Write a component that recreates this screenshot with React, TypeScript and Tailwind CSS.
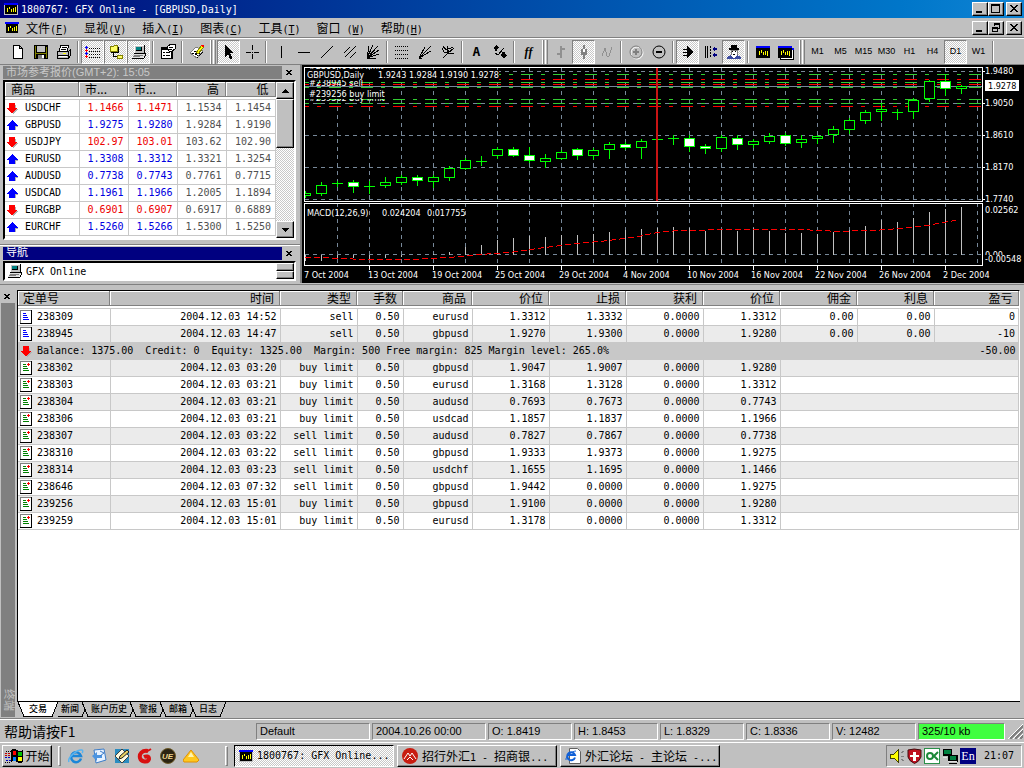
import { Fragment, type ReactNode } from 'react'
import clsx from 'clsx'

const mono = 'font-["DejaVu_Sans_Mono","Noto_Sans_CJK_SC",monospace] text-[10px]'
const hans = 'font-["Noto_Sans_CJK_SC",sans-serif] text-[12px]'
const sans = 'font-["Liberation_Sans","Noto_Sans_CJK_SC",sans-serif] text-[11px]'

const raised = 'border border-t-white border-l-white border-r-black border-b-black shadow-[inset_-1px_-1px_0_#808080] bg-[#c0c0c0]'
const sunken = 'border border-t-[#808080] border-l-[#808080] border-r-white border-b-white'
const dither = 'bg-[conic-gradient(#fff_25%,#c8c8c8_0_50%,#fff_0_75%,#c8c8c8_0)] bg-[length:2px_2px]'

const menus = [
  ['文件', '(', 'F', ')'],
  ['显视', '(', 'V', ')'],
  ['插入', '(', 'I', ')'],
  ['图表', '(', 'C', ')'],
  ['工具', '(', 'T', ')'],
  ['窗口', ' (', 'W', ')'],
  ['帮助', '(', 'H', ')'],
]

const quotes = [
  ['down', 'USDCHF', '1.1466', '1.1471', '1.1534', '1.1454'],
  ['up', 'GBPUSD', '1.9275', '1.9280', '1.9284', '1.9190'],
  ['down', 'USDJPY', '102.97', '103.01', '103.62', '102.90'],
  ['up', 'EURUSD', '1.3308', '1.3312', '1.3321', '1.3254'],
  ['up', 'AUDUSD', '0.7738', '0.7743', '0.7761', '0.7715'],
  ['up', 'USDCAD', '1.1961', '1.1966', '1.2005', '1.1894'],
  ['down', 'EURGBP', '0.6901', '0.6907', '0.6917', '0.6889'],
  ['up', 'EURCHF', '1.5260', '1.5266', '1.5300', '1.5250'],
]

const openOrders = [
  ['238309', '2004.12.03 14:52', 'sell', '0.50', 'eurusd', '1.3312', '1.3332', '0.0000', '1.3312', '0.00', '0.00', '0'],
  ['238945', '2004.12.03 14:47', 'sell', '0.50', 'gbpusd', '1.9270', '1.9300', '0.0000', '1.9280', '0.00', '0.00', '-10'],
]

const pendingOrders = [
  ['238302', '2004.12.03 03:20', 'buy limit', '0.50', 'gbpusd', '1.9047', '1.9007', '0.0000', '1.9280'],
  ['238303', '2004.12.03 03:21', 'buy limit', '0.50', 'eurusd', '1.3168', '1.3128', '0.0000', '1.3312'],
  ['238304', '2004.12.03 03:21', 'buy limit', '0.50', 'audusd', '0.7693', '0.7673', '0.0000', '0.7743'],
  ['238306', '2004.12.03 03:21', 'buy limit', '0.50', 'usdcad', '1.1857', '1.1837', '0.0000', '1.1966'],
  ['238307', '2004.12.03 03:22', 'sell limit', '0.50', 'audusd', '0.7827', '0.7867', '0.0000', '0.7738'],
  ['238310', '2004.12.03 03:22', 'sell limit', '0.50', 'gbpusd', '1.9333', '1.9373', '0.0000', '1.9275'],
  ['238314', '2004.12.03 03:23', 'sell limit', '0.50', 'usdchf', '1.1655', '1.1695', '0.0000', '1.1466'],
  ['238646', '2004.12.03 07:32', 'sell limit', '0.50', 'gbpusd', '1.9442', '0.0000', '0.0000', '1.9275'],
  ['239256', '2004.12.03 15:01', 'buy limit', '0.50', 'gbpusd', '1.9100', '0.0000', '0.0000', '1.9280'],
  ['239259', '2004.12.03 15:01', 'buy limit', '0.50', 'eurusd', '1.3178', '0.0000', '0.0000', '1.3312'],
]

const orderHeads = ['定单号', '时间', '类型', '手数', '商品', '价位', '止损', '获利', '价位', '佣金', '利息', '盈亏']

// high, low, body top, body bottom, filled; one every 16px
const candles: [number, number, number, number, boolean][] = [
  [191, 197, 193, 196, false],
  [182, 195, 185, 194, false],
  [181, 186, 183, 183, false],
  [180, 192, 182, 187, true],
  [181, 193, 186, 186, false],
  [177, 187, 182, 186, false],
  [175, 184, 177, 183, false],
  [175, 185, 177, 181, true],
  [175, 187, 177, 182, false],
  [166, 180, 168, 178, false],
  [158, 169, 160, 169, false],
  [156, 165, 161, 161, false],
  [147, 158, 149, 156, false],
  [147, 156, 149, 156, true],
  [147, 162, 155, 161, true],
  [154, 167, 158, 162, false],
  [150, 159, 152, 159, false],
  [148, 159, 149, 156, true],
  [148, 159, 150, 156, false],
  [142, 158, 144, 150, false],
  [142, 149, 144, 148, true],
  [139, 158, 141, 148, false],
  [135, 141, 139, 139, false],
  [135, 144, 138, 138, false],
  [135, 151, 138, 147, true],
  [144, 153, 146, 149, true],
  [135, 151, 137, 149, false],
  [135, 149, 138, 145, true],
  [139, 147, 141, 145, false],
  [133, 143, 136, 142, false],
  [133, 145, 135, 144, true],
  [135, 147, 139, 143, false],
  [135, 143, 136, 139, false],
  [126, 142, 129, 135, false],
  [118, 133, 120, 130, false],
  [110, 123, 112, 121, false],
  [103, 120, 109, 112, false],
  [109, 119, 112, 112, false],
  [98, 118, 100, 112, false],
  [80, 101, 81, 99, false],
  [74, 95, 81, 89, true],
  [85, 93, 86, 89, false],
]

const macd = [
  261, 261, 259, 258, 259, 258, 257, 255, 254, 252, 247, 245, 240, 238, 236, 237, 235, 235, 234, 232, 230,
  229, 228, 227, 228, 231, 229, 231, 228, 231, 233, 233, 234, 232, 230, 226, 220, 222, 218, 212, 209, 207,
]

const tradeLines: [number, string][] = [
  [74, '#32cd32'],
  [79, '#ff0000'],
  [82, '#32cd32'],
  [84, '#ff0000'],
  [87, '#32cd32'],
  [99, '#32cd32'],
  [103, '#32cd32'],
  [106, '#ff0000'],
]

const dates = ['7 Oct 2004', '13 Oct 2004', '19 Oct 2004', '25 Oct 2004', '29 Oct 2004', '4 Nov 2004', '10 Nov 2004', '16 Nov 2004', '22 Nov 2004', '26 Nov 2004', '2 Dec 2004']

function Icon({ w = 16, h = 16, children }: { w?: number; h?: number; children: ReactNode }) {
  return (
    <svg width={w} height={h} viewBox={`0 0 ${w} ${h}`} fill="none" stroke="none" shapeRendering="crispEdges" className="shrink-0" aria-hidden="true">
      {children}
    </svg>
  )
}

function AppIcon() {
  return (
    <Icon w={14} h={12}>
      <path d="M0 0h14v12H0z" fill="#c0c0c0" />
      <path d="M0 0h14v2H0z" fill="#0000ff" />
      <path d="M1 2h12v9H1z" fill="#000" />
      <path d="M3.5 5v4M5.5 4v2M7.5 6v3M9.5 5v4M11.5 4v5" stroke="#ffff00" />
    </Icon>
  )
}

function PcIcon() {
  return (
    <Icon>
      <path d="M4 1h10v8H4z" fill="#000" />
      <path d="M3 1h10v8H3z" fill="#c0c0c0" />
      <path d="M3 1.5h10M3.5 1v8" stroke="#fff" />
      <path d="M5 3h6v4H5z" fill="#000" />
      <path d="M5 3h5v3H5z" fill="#008080" />
      <path d="M3 10h11l-2 4H1z" fill="#e0e0e0" />
      <path d="M1 14.5h12M13.5 14v-2M14.5 12v-3M3 9.5h11" stroke="#000" />
      <path d="M3 11.5h9M2 12.5h7" stroke="#808080" />
    </Icon>
  )
}

function Arrow({ up }: { up: boolean }) {
  return (
    <Icon w={13} h={12}>
      {up ? (
        <>
          <path d="M7 3l6 5h-3v3H5V8z" fill="#b0b0b0" />
          <path d="M6 1L12 7H9v4H3V7H0z" fill="#0000ff" />
        </>
      ) : (
        <>
          <path d="M7 12l6-5h-3V3H5z" fill="#b0b0b0" />
          <path d="M6 11L12 6H9V1H3v5H0z" fill="#ff0000" />
        </>
      )}
    </Icon>
  )
}

function OrderIcon({ pending }: { pending: boolean }) {
  return (
    <Icon w={12} h={14}>
      <path d="M0 0h12v14H0z" fill="#000" />
      <path d="M0 0h11v13H0z" fill="#808080" />
      <path d="M1 1h10v12H1z" fill="#fff" />
      <path d="M3 3.5h3M3 5.5h4M3 7.5h5M3 9.5h6" stroke={pending ? '#008000' : '#0000ff'} />
      {pending && <path d="M7 3.5h3M8.5 2v3" stroke="#ff0000" />}
    </Icon>
  )
}

const toolIcons: Record<string, ReactNode> = {
  new: <path d="M3.5 1.5h6l3 3v10h-9zM9.5 1.5v3h3" fill="#fff" stroke="#000" />,
  save: (
    <>
      <path d="M1 1h14v14H1z" fill="#000" />
      <path d="M2 2h1v12H2zM13 3h1v11h-1zM3 9h10v1H3z" fill="#808000" />
      <path d="M4 2h8v6H4z" fill="#c0c0c0" />
      <path d="M5 11h6v4H5z" fill="#808080" />
      <path d="M9 11h2v3H9z" fill="#fff" />
    </>
  ),
  print: (
    <>
      <path d="M5 1h8l-2 6H3z" fill="#fff" stroke="#000" />
      <path d="M1.5 7.5h11l2-2v6l-2 3h-11z" fill="#c0c0c0" stroke="#000" />
      <path d="M6 3.5h5M5 5.5h5M2 11.5h11M12.5 7v7" stroke="#000" />
      <path d="M3 12.5h8" stroke="#fff" />
      <path d="M7 9.5h3" stroke="#ffff00" />
    </>
  ),
  market: (
    <>
      <path d="M4 4.5h12M4 7.5h12M4 10.5h12M4 13.5h12" stroke="#000" strokeDasharray="1 1" />
      <path d="M0 3.5h3M1.5 2v3M0 9.5h3M1.5 8v3" stroke="#0000ff" />
      <path d="M0 6.5h3M1.5 5v3M0 12.5h3M1.5 11v3" stroke="#ff0000" />
    </>
  ),
  navigator: (
    <>
      <path d="M2.5 2.5h3l1-1h3v6h-7z" fill="#ffff66" stroke="#808000" />
      <path d="M5.5 8v4.5h4" stroke="#000" />
      <path d="M3 8.5h7M10.5 3v6" stroke="#000" />
      <path d="M9.5 11.5h5v3h-5z" fill="#ffff66" stroke="#808000" />
    </>
  ),
  pc: <PcIcon />,
  order: (
    <>
      <path d="M1.5 3.5h10v11h-10z" fill="#fff" stroke="#000" />
      <path d="M2 4h9v2H2zM12 5h1v10h-1z" fill="#000" />
      <path d="M3 8.5h2M3 11.5h2M6 8.5h4M6 11.5h4" stroke="#000" />
      <path d="M7 3l4-3h4v5l-3 2H9z" fill="#fff" stroke="#000" />
      <path d="M9 3.5h4M9 5.5h3" stroke="#000" />
    </>
  ),
  edit: (
    <>
      <path d="M1 9l6-6 7 4-6 7z" fill="#fff" stroke="#808080" />
      <path d="M3 9l6 3M5 7l6 3M8 14l6-6" stroke="#000" strokeDasharray="2 1" />
      <path d="M7 9l6-8 2 2-6 7z" fill="#ffff00" stroke="#808000" />
      <path d="M12 1h3v2h-2z" fill="#ff0000" />
      <path d="M6 9h2v2H6z" fill="#000" />
    </>
  ),
  cursor: <path d="M4 1v12l3-3 2 5h2V13L9 9h4z" fill="#000" />,
  cross: <path d="M8.5 1v5M8.5 10v5M2 8.5h5M10 8.5h5M8 8.5h1" stroke="#000" />,
  vline: <path d="M8.5 2v12" stroke="#000" />,
  hline: <path d="M2 8.5h12" stroke="#000" />,
  trend: <path d="M2 14L14 2" stroke="#000" />,
  channel: <path d="M2 9l6-6M3 13L14 2M8 14l6-6" stroke="#000" />,
  fan: <path d="M2 14L4 2M2 14L8 1M2 14L13 2M2 14l12-8M2 14l12-4M2 14h9" stroke="#000" />,
  fibo: <path d="M1 2.5h14M1 6.5h14M1 10.5h14M1 14.5h14" stroke="#000" strokeDasharray="1 1" />,
  fibofan: <path d="M2 14L8 3M2 14L14 2M2 14l12-7M2 14h3" stroke="#000" />,
  fork: <path d="M3 14l5-5M8 9L7 2M8 9l6-5M8 9h6M2 4l2 4 4 1M3 2l3 4 7-3M8 9l1-3" stroke="#000" />,
  arrows: (
    <>
      <path d="M1 4l3-3 3 3-2 1v2H3V5zM8 11l2-1V8h3v2l2 1-3 4z" fill="#000" />
      <path d="M3 9l3 2 6-7" stroke="#000" />
    </>
  ),
  bars: <path d="M8 2v12M4 10h4M8 5h4" stroke="#909090" strokeWidth="2" />,
  candle: (
    <>
      <path d="M8 1v14" stroke="#808080" strokeWidth="2" />
      <path d="M5 5h6v6H5z" fill="#808080" />
      <path d="M7 5h2v3H7z" fill="#fff" />
    </>
  ),
  line: <path d="M3 12l3-8 2 8 2 0 3-9" stroke="#909090" />,
  zoomin: (
    <g shapeRendering="auto">
      <circle cx="9" cy="9" r="6" stroke="#fff" />
      <circle cx="8" cy="8" r="6" stroke="#808080" />
      <path d="M5 8h6M8 5v6" stroke="#808080" strokeWidth="2" />
    </g>
  ),
  zoomout: (
    <g shapeRendering="auto">
      <circle cx="8" cy="8" r="6" stroke="#000" />
      <path d="M5 8h6" stroke="#000" strokeWidth="2" />
    </g>
  ),
  scroll: (
    <>
      <path d="M7 2l7 6-7 6z" fill="#000" />
      <path d="M3 5.5h5M3 8.5h5M3 11.5h5" stroke="#000" />
    </>
  ),
  shift: (
    <>
      <path d="M2.5 2v12M4.5 2v12" stroke="#000" />
      <path d="M7.5 2v12" stroke="#000" strokeDasharray="2 1" />
      <path d="M9 5l3-3v2h2v2h-2v2zM9 11l3-3v2h2v2h-2v2z" fill="#000080" />
    </>
  ),
  expert: (
    <>
      <path d="M5 1h6v3h2v2H3V4h2z" fill="#000" />
      <path d="M5 6h6v5H5z" fill="#fff" stroke="#808080" />
      <path d="M6 7.5h1M9 7.5h1M7 10.5h2" stroke="#000" />
      <path d="M1 15v-2l4-2 3 2 3-2 4 2v2z" fill="#3a4aa0" />
      <path d="M5 11h6l-3 4z" fill="#fff" />
    </>
  ),
  chartwin: (
    <>
      <path d="M1 2h14v12H1z" fill="#000" />
      <path d="M1 2h14v2H1z" fill="#0000ff" />
      <path d="M4.5 7v4M6.5 6v3M8.5 8v3M10.5 7v4M12.5 7v5" stroke="#ffff00" />
    </>
  ),
  chartwins: (
    <>
      <path d="M2.5 4.5h13v11h-13z" fill="#fff" stroke="#000" />
      <path d="M0 2h14v12H0z" fill="#000" />
      <path d="M0 2h14v2H0zM14 4h2v2h-2z" fill="#0000ff" />
      <path d="M3.5 7v4M5.5 6v3M7.5 8v3M9.5 7v4M11.5 7v5" stroke="#ffff00" />
    </>
  ),
}

function Tool({ name, on, children }: { name: string; on?: boolean; children?: ReactNode }) {
  return (
    <button aria-label={name} className={clsx('flex h-[24px] w-[23px] shrink-0 items-center justify-center', on && sunken, on && dither)}>
      {children ?? <Icon>{toolIcons[name]}</Icon>}
    </button>
  )
}

function Sep() {
  return <div className="ml-[2px] mr-[2px] h-[22px] w-[2px] shrink-0 border-l border-l-[#808080] bg-white" />
}

function Grip() {
  return (
    <div className="flex h-[24px] w-[9px] shrink-0 gap-px pl-[2px]">
      <div className="w-[2px] border-l border-white bg-[#808080]" />
      <div className="w-[3px] border-l border-white border-r border-r-[#808080]" />
    </div>
  )
}

function WinButtons({ restore }: { restore?: boolean }) {
  const button = clsx('flex h-[14px] w-4 items-center justify-center', raised)
  return (
    <div className="ml-auto flex pr-[2px]">
      <button aria-label="Minimize" className={button}>
        <Icon w={10} h={10}><path d="M1 8h6" stroke="#000" strokeWidth="2" /></Icon>
      </button>
      <button aria-label={restore ? 'Restore' : 'Maximize'} className={button}>
        <Icon w={10} h={10}>
          {restore ? (
            <path d="M3.5 3V.5h5v5H6M3 1.5h6M1.5 4.5h5v4h-5zM1 5.5h6" stroke="#000" />
          ) : (
            <path d="M.5.5h8v8h-8zM0 1.5h9" stroke="#000" />
          )}
        </Icon>
      </button>
      <button aria-label="Close" className={clsx('ml-[2px]', button)}>
        <Icon w={10} h={10}><path d="M1 1l7 7M2 1l7 7M8 1L1 8M9 1L2 8" stroke="#000" /></Icon>
      </button>
    </div>
  )
}

function CloseX() {
  return (
    <button aria-label="Close panel" className="flex h-[13px] w-[14px] shrink-0 items-center justify-center">
      <Icon w={8} h={7}><path d="M1 1l5 5M2 1l5 5M6 1L1 6M7 1L2 6" stroke="#000" /></Icon>
    </button>
  )
}

function MarketWatch() {
  const head = 'h-[15px] border-r border-b border-[#808080] bg-[#c0c0c0] px-[6px] leading-[14px] shadow-[inset_1px_1px_0_#fff]'
  return (
    <section className="flex w-[302px] shrink-0 flex-col border-r-2 border-[#808080] pr-1 pl-[3px]">
      <div className="flex h-[15px] items-center">
        <h2 className={clsx('h-[13px] flex-1 overflow-hidden bg-[#808080] pl-[3px] leading-[12px] text-[#c8c8c8]', sans)}>市场参考报价(GMT+2): 15:05</h2>
        <CloseX />
      </div>
      <div className="flex h-[160px] items-start border-2 border-t-black border-l-black border-r-white border-b-white bg-white">
        <table className={clsx('w-full table-fixed border-collapse', mono)}>
          <colgroup>
            <col className="w-[74px]" />
            <col className="w-[49px]" />
            <col className="w-[49px]" />
            <col className="w-[49px]" />
            <col />
          </colgroup>
          <thead>
            <tr className={hans}>
              {['商品', '市...', '市...', '高', '低'].map((h, i) => (
                <th key={i} className={clsx('p-0 pb-[2px] font-normal', i > 2 ? 'text-right' : 'text-left')}>
                  <div className={head}>{h}</div>
                </th>
              ))}
            </tr>
          </thead>
          <tbody>
            {quotes.map(([dir, symbol, ...prices]) => (
              <tr key={symbol} className="h-[17px]">
                <td className="border-y border-r border-[#c8c8c8] p-0">
                  <div className="flex h-4 items-center gap-[6px] pl-px leading-4">
                    <Arrow up={dir === 'up'} />
                    {symbol}
                  </div>
                </td>
                {prices.map((p, i) => (
                  <td
                    key={i}
                    className={clsx(
                      'border border-[#c8c8c8] p-0 pr-[4px] text-right leading-4',
                      i > 1 ? 'text-[#505050]' : dir === 'up' ? 'text-[#0000e0]' : 'text-[#ee0000]',
                    )}
                  >
                    {p}
                  </td>
                ))}
              </tr>
            ))}
          </tbody>
        </table>
        <div className={clsx('flex h-full w-[18px] shrink-0 flex-col', dither)}>
          <button aria-label="Scroll up" className={clsx('flex h-[17px] items-center justify-center', raised)}>
            <Icon w={8} h={4}><path d="M4 0l4 4H0z" fill="#000" /></Icon>
          </button>
          <div className={clsx('h-[49px]', raised)} />
          <button aria-label="Scroll down" className={clsx('mt-auto flex h-[17px] items-center justify-center', raised)}>
            <Icon w={8} h={4}><path d="M0 0h8L4 4z" fill="#000" /></Icon>
          </button>
        </div>
      </div>
      <div className="-mr-1 -ml-[3px] mt-[4px] h-[2px] border-t border-[#808080] bg-white" />
      <div className="flex h-[15px] items-center">
        <h2 className={clsx('h-[13px] flex-1 overflow-hidden bg-[#000080] pl-[3px] leading-[10px] text-white', sans)}>导航</h2>
        <CloseX />
      </div>
      <div className={clsx('flex h-[20px] items-center border-2 border-t-black border-l-black border-r-white border-b-white bg-white pl-[2px]', mono)}>
        <PcIcon />
        <span className="pl-[3px]">GFX Online</span>
        <div className="ml-auto flex h-4 w-[18px] flex-col">
          <button aria-label="Previous" className={clsx('h-2', raised)} />
          <button aria-label="Next" className={clsx('h-2', raised)} />
        </div>
      </div>
    </section>
  )
}

function Chart() {
  const cols = Array.from({ length: 21 }, (_, i) => 337 + i * 32)
  const rows = [71, 103, 135, 167, 199, 254]
  return (
    <div className="min-w-0 flex-1 bg-black">
      <svg
        viewBox="302 65 722 218"
        preserveAspectRatio="xMinYMin meet"
        className='h-[218px] w-full font-["DejaVu_Sans_Condensed","DejaVu_Sans",sans-serif] text-[9px]'
        shapeRendering="crispEdges"
        fill="none"
        role="img"
        aria-label="GBPUSD,Daily"
      >
        {cols.map(x => (
          <path key={x} d={`M${x + 0.5} 67v134M${x + 0.5} 203v62`} stroke="#778899" strokeDasharray="4 4" />
        ))}
        {rows.map(y => (
          <path key={y} d={`M305 ${y + 0.5}h677`} stroke="#778899" strokeDasharray="4 4" />
        ))}
        <path d="M305 86.5h677" stroke="#778899" />
        {tradeLines.map(([y, color]) => (
          <path key={y} d={`M305 ${y + 0.5}h676`} stroke={color} strokeDasharray="12 8 4 8" strokeDashoffset={8} />
        ))}
        {macd.map((y, i) => (
          <path key={i} d={`M${305.5 + i * 16} 254.5V${y}`} stroke="#c0c0c0" />
        ))}
        <path
          d="M305 257.5L329 258L353 259L369 259.5H401L420 259L449 257.5L481 254.5L513 252L545 247.5L577 243.5L609 240.5L641 236L657 232.5L673 231L705 230L737 229.5H800L830 231H850L873 230.5L900 228.5L930 225L957 220"
          stroke="#ff0000"
          strokeDasharray="6 3"
        />
        {candles.map(([high, low, top, bottom, filled], i) => {
          const x = 305.5 + i * 16
          return (
            <g key={i} stroke="#00ff00">
              <path d={`M${x} ${high}V${low + 1}`} />
              {top === bottom ? (
                <path d={`M${x - 5.5} ${top + 0.5}h11`} />
              ) : (
                <rect x={x - 5} y={top + 0.5} width="10" height={bottom - top - 1} fill={filled ? '#fff' : '#000'} />
              )}
            </g>
          )
        })}
        <path d="M657 67v134" stroke="#c81414" strokeWidth="2" />

        <g fill="#fff">
          <text x="309" y="69">#238646 sell limit</text>
          <text x="309" y="86">#238945 sell</text>
          <path d="M305 70h194v10H305z" fill="#000" />
          <text x="307" y="78">GBPUSD,Daily</text>
          <text x="378" y="78">1.9243 1.9284 1.9190 1.9278</text>
          <text x="309" y="101">#239302 buy limit</text>
          <path d="M308 89h78v10h-78z" fill="#000" />
          <text x="309" y="97">#239256 buy limit</text>
          <text x="307" y="216">MACD(12,26,9)</text>
          <text x="382" y="216">0.024204</text>
          <text x="427" y="216">0.017755</text>
        </g>

        {/* area above and left of the plot hides what sticks out of the frame */}
        <path d="M302 65h680v2H302zM302 65h2v202h-2z" fill="#000" />
        <path d="M304.5 67.5h678v134h-678zM304.5 203.5h678v62h-678z" stroke="#fff" />
        {cols.filter((_, i) => i % 2 === 1).map(x => (
          <path key={x} d={`M${x + 0.5} 266v4`} stroke="#fff" />
        ))}
        {rows.slice(0, 5).map(y => (
          <path key={y} d={`M982 ${y + 0.5}h3`} stroke="#fff" />
        ))}
        <g fill="#fff">
          {['1.9480', '1.9050', '1.8610', '1.8170', '1.7740'].map((t, i) => (
            <text key={t} x="985" y={74 + i * 32}>{t}</text>
          ))}
          <text x="985" y="213">0.02562</text>
          <text x="985" y="258">0.00</text>
          <path d="M985 255h37v9h-37z" fill="#000" />
          <text x="985" y="262">-0.00548</text>
          {dates.map((d, i) => (
            <text key={d} x={304 + i * 64 - (i > 2 ? 1 : 0)} y="278">{d}</text>
          ))}
          <path d="M985 80h34v11h-34z" />
        </g>
        <text x="988" y="89" fill="#000">1.9278</text>
      </svg>
    </div>
  )
}

function TabEdge({ kind }: { kind: 'first' | 'active' | 'middle' | 'last' }) {
  return (
    <Icon w={6} h={15}>
      {kind === 'first' && <path d="M0 0L6 14.5V0z" fill="#fff" />}
      {kind === 'first' && <path d="M0 0l6 14.5" stroke="#000" />}
      {kind === 'active' && <path d="M0 0h6L0 14.5z" fill="#fff" />}
      {kind === 'middle' && <path d="M0 0l6 14.5M0 14.5l3-7" stroke="#000" />}
      {(kind === 'active' || kind === 'last') && <path d="M6 0L0 14.5" stroke="#000" />}
    </Icon>
  )
}

function Terminal() {
  const tabs = ['交易', '新闻', '账户历史', '警报', '邮箱', '日志']
  const cell = 'border border-[#c8c8c8] p-0 pr-[3px] text-right leading-4'
  const first = 'flex h-4 items-center gap-[5px] pl-[2px] leading-4'
  return (
    <section className="flex flex-1 border-t border-[#808080] pt-[5px] pr-1">
      <div className="flex w-[17px] shrink-0 flex-col pr-[2px] pb-[2px]">
        <CloseX />
        <div className={clsx('ml-px flex flex-1 items-end overflow-hidden bg-[#808080] text-[#c0c0c0]', sans)}>
          <span className="h-7 pl-px leading-[13px] [writing-mode:vertical-rl] [text-orientation:sideways]">终端</span>
        </div>
      </div>
      <div className="flex min-w-0 flex-1 flex-col">
        <div className="flex-1 border-t border-l border-r border-t-black border-l-black border-r-white bg-white">
          <table className={clsx('w-full table-fixed border-collapse', mono)}>
            <colgroup>
              <col className="w-[92px]" />
              <col className="w-[170px]" />
              <col className="w-[77px]" />
              <col className="w-[46px]" />
              <col className="w-[69px]" />
              <col className="w-[77px]" />
              <col className="w-[77px]" />
              <col className="w-[77px]" />
              <col className="w-[77px]" />
              <col className="w-[77px]" />
              <col className="w-[77px]" />
              <col />
            </colgroup>
            <thead>
              <tr className={hans}>
                {orderHeads.map((h, i) => (
                  <th key={i} className={clsx('p-0 pb-[2px] font-normal', i ? 'text-right' : 'text-left')}>
                    <div className="h-[15px] border-r border-b border-[#808080] bg-[#c0c0c0] px-[5px] leading-[14px] shadow-[inset_1px_1px_0_#fff]">{h}</div>
                  </th>
                ))}
              </tr>
            </thead>
            <tbody>
              {openOrders.map(([id, ...values], n) => (
                <tr key={id} className={clsx('h-[17px]', n % 2 ? 'bg-[#ebebeb]' : 'bg-white')}>
                  <td className="border-y border-r border-[#c8c8c8] p-0">
                    <div className={first}><OrderIcon pending={false} />{id}</div>
                  </td>
                  {values.map((v, i) => <td key={i} className={cell}>{v}</td>)}
                </tr>
              ))}
              <tr className="h-[17px] bg-[#c8c8c8]">
                <td colSpan={11} className="p-0">
                  <div className="flex h-4 items-center gap-[4px] pl-[2px] leading-4 whitespace-pre">
                    <Arrow up={false} />
                    Balance: 1375.00  Credit: 0  Equity: 1325.00  Margin: 500 Free margin: 825 Margin level: 265.0%
                  </div>
                </td>
                <td className="p-0 pr-[3px] text-right leading-4">-50.00</td>
              </tr>
              {pendingOrders.map(([id, ...values], n) => (
                <tr key={id} className={clsx('h-[17px]', n % 2 ? 'bg-white' : 'bg-[#ebebeb]')}>
                  <td className="border-y border-r border-[#c8c8c8] p-0">
                    <div className={first}><OrderIcon pending />{id}</div>
                  </td>
                  {values.map((v, i) => <td key={i} className={cell}>{v}</td>)}
                  <td colSpan={3} className="border border-[#c8c8c8] p-0" />
                </tr>
              ))}
            </tbody>
          </table>
        </div>
        <div className='flex h-[18px] border-t border-black pl-px font-["Noto_Sans_CJK_SC",sans-serif] text-[9px]'>
          {tabs.map((t, i) => (
            <Fragment key={t}>
              {i === 0 && <TabEdge kind="first" />}
              <button className={clsx('h-[15px] border-b border-black leading-[14px] font-medium', i === 0 ? 'bg-white px-[5px]' : 'px-[3px]')}>{t}</button>
              <TabEdge kind={i === 0 ? 'active' : i === tabs.length - 1 ? 'last' : 'middle'} />
            </Fragment>
          ))}
        </div>
      </div>
    </section>
  )
}

function StatusBar() {
  const cell = clsx('h-[17px] shrink-0 pl-[3px] leading-[15px]', sunken)
  return (
    <footer className={clsx('flex h-[23px] items-center gap-[2px] border-t border-white pr-px pl-1 shadow-[0_-1px_0_#808080]', sans)}>
      <span className='flex-1 font-["Noto_Sans_CJK_SC",sans-serif] text-[14px] leading-4'>帮助请按F1</span>
      <div className={clsx(cell, 'w-[114px]')}>Default</div>
      <div className={clsx(cell, 'w-[114px]')}>2004.10.26 00:00</div>
      {['O: 1.8419', 'H: 1.8453', 'L: 1.8329', 'C: 1.8336', 'V: 12482'].map(t => (
        <div key={t} className={clsx(cell, 'w-[84px]')}>{t}</div>
      ))}
      <div className={clsx(cell, 'w-[87px] bg-[#40ff40]')}>325/10 kb</div>
      <Icon w={16} h={16}>
        <path d="M1 16L16 1M6 16L16 6M11 16l5-5" stroke="#fff" />
        <path d="M3 16L16 3M8 16l8-8M13 16l3-3" stroke="#808080" strokeWidth="2" />
      </Icon>
    </footer>
  )
}

function IeIcon() {
  return (
    <svg width="16" height="16" viewBox="0 0 16 16" fill="none" aria-hidden="true" className="shrink-0">
      <path d="M13 10.5A5 5 0 1 1 13 8H4" stroke="#1c86d8" strokeWidth="2.5" />
      <path d="M1 14C-1 10 9 1 14 2c1 0 1 2 0 3" stroke="#58b4f0" strokeWidth="1.5" />
    </svg>
  )
}

function Taskbar() {
  const task = 'flex h-[22px] w-[160px] shrink-0 items-center gap-[4px] px-[4px] text-left whitespace-pre'
  const grip = 'h-[20px] w-[3px] shrink-0 border border-t-white border-l-white border-r-[#808080] border-b-[#808080]'
  return (
    <nav className={clsx('flex h-[26px] items-center border-t border-white pl-[2px]', mono)}>
      <button className={clsx('flex h-[22px] w-[50px] shrink-0 items-center justify-center gap-px', raised, hans)}>
        <Icon w={20} h={16}>
          <path d="M7 2q4-2 6 0t6 0v12q-4 2-6 0t-6 0z" fill="#000" />
          <path d="M9 3q2-1 3 0v4q-1-1-3 0z" fill="#ff0000" />
          <path d="M14 4q2 1 4 0v4q-2 1-4 0z" fill="#00c000" />
          <path d="M9 9q2-1 3 0v4q-1-1-3 0z" fill="#0080ff" />
          <path d="M14 9q2 1 4 0v4q-2 1-4 0z" fill="#ffff00" />
          <path d="M1 5.5h6M1 7.5h6" stroke="#c00000" strokeDasharray="2 1" />
          <path d="M1 9.5h6M2 12.5h5" stroke="#0000c0" strokeDasharray="2 1" />
          <path d="M2 3.5h5M1 14.5h6" stroke="#000" strokeDasharray="1 1" />
        </Icon>
        开始
      </button>
      <div className={clsx('ml-[6px]', grip)} />
      <div className="flex gap-[7px] pl-[7px]">
        <IeIcon />
        <svg width="16" height="16" viewBox="0 0 16 16" aria-hidden="true">
          <path d="M3 2l10-1 2 11-10 3z" fill="#e8f2ff" stroke="#3c7cc8" />
          <path d="M1 8l5-4v3h5v3H6v3z" fill="#4c94e0" />
          <path d="M9 3l4 2-4 3" fill="none" stroke="#3c7cc8" />
        </svg>
        <svg width="16" height="16" viewBox="0 0 16 16" aria-hidden="true">
          <path d="M1 1h14v14H1z" fill="#2a8cc0" />
          <path d="M8 1l7 7-7 7-7-7z" fill="#fffbe0" stroke="#404040" />
          <path d="M5 11l1-3 7-6 2 2-7 6z" fill="#e8d060" stroke="#202020" />
        </svg>
        <svg width="16" height="16" viewBox="0 0 16 16" fill="none" aria-hidden="true">
          <path d="M11 3C5 2 2 6 3 10s8 5 9 1c0-3-3-3-5-2" stroke="#d81010" strokeWidth="4" />
          <path d="M9 4l5-3" stroke="#d81010" strokeWidth="2" />
        </svg>
        <svg width="16" height="16" viewBox="0 0 16 16" aria-hidden="true" className='font-["Liberation_Sans",sans-serif] text-[8px] font-bold italic'>
          <circle cx="8" cy="8" r="7.5" fill="#2c2412" stroke="#6c5a28" />
          <text x="2" y="11" fill="#f0d890">UE</text>
        </svg>
        <svg width="16" height="16" viewBox="0 0 16 16" aria-hidden="true">
          <path d="M8 2l8 10-2 2H1l-1-2z" fill="#ffc820" stroke="#e09000" />
          <path d="M8 4l3 5H5z" fill="#fff4b0" />
        </svg>
      </div>
      <div className="w-[26px] shrink-0" />
      <div className={clsx('mr-[6px]', grip)} />
      <div className="flex gap-[3px]">
        <button className={clsx(task, 'border border-t-black border-l-black border-r-white border-b-white', dither)}>
          <AppIcon />
          1800767: GFX Online...
        </button>
        <button className={clsx(task, raised)}>
          <svg width="16" height="16" viewBox="0 0 16 16" fill="none" aria-hidden="true" className="shrink-0">
            <circle cx="8" cy="8" r="8" fill="#c81c10" />
            <path d="M2 11l4-6 2 3 2-3 4 6M5 12l3-3 3 3" stroke="#fff" />
          </svg>
          <span><span className={hans}>招行外汇</span>1 - <span className={hans}>招商银</span>...</span>
        </button>
        <button className={clsx(task, raised)}>
          <svg width="16" height="16" viewBox="0 0 16 16" fill="none" aria-hidden="true" className="shrink-0">
            <path d="M4.5.5h8l3 3v12h-11z" fill="#fff" stroke="#606060" />
            <path d="M10 9.5A4 4 0 1 1 10 7H3" stroke="#1060d8" strokeWidth="2" />
            <path d="M1 12C0 9 7 3 11 3" stroke="#1060d8" />
          </svg>
          <span><span className={hans}>外汇论坛</span> - <span className={hans}>主论坛</span> -...</span>
        </button>
      </div>
      <div className={clsx('mr-[2px] ml-auto flex h-[22px] w-[136px] items-center gap-[2px] pl-[2px]', sunken)}>
        <Icon>
          <path d="M1 6h4l4-4v12l-4-4H1z" fill="#ffff00" stroke="#404000" />
          <path d="M12 5l3-2M12 8.5h3M12 11l3 2" stroke="#808080" />
        </Icon>
        <svg width="15" height="16" viewBox="0 0 15 16" aria-hidden="true">
          <path d="M1 2q6-2 13 0v7q-2 5-6.5 6.5Q2 13 1 9z" fill="#c01020" stroke="#401010" />
          <path d="M6 4h3v3h3v2H9v4H6V9H3V7h3z" fill="#fff" />
        </svg>
        <Icon>
          <path d="M0 0h16v16H0z" fill="#2a9048" />
          <path d="M1 1h14v14H1z" fill="#fff" />
          <g shapeRendering="auto" stroke="#1c8838" strokeWidth="2">
            <circle cx="6" cy="8" r="3" />
            <path d="M9 9l5-5M10 8l4 4" />
          </g>
        </Icon>
        <Icon>
          <path d="M1 1h9v7H1zM6 7h10v7H6zM7 15h8v1H7z" fill="#000" />
          <path d="M2 2h7v4H2zM8 8h6v4H8z" fill="#008040" />
          <path d="M1 9.5h4M6 13.5h9" stroke="#e0e0e0" />
        </Icon>
        <span className='h-4 w-4 bg-[#000080] text-center font-["Liberation_Serif",serif] text-[12px] leading-4 text-white'>En</span>
        <time className="pl-[6px]">21:07</time>
      </div>
    </nav>
  )
}

export default function App() {
  return (
    <div className="flex min-h-screen flex-col overflow-hidden bg-[#c0c0c0] text-black">
      <header className={clsx('flex h-[18px] items-center gap-[3px] bg-linear-to-r from-[#00007b] to-[#1084d4] pl-1 text-white', mono)}>
        <AppIcon />
        <h1>1800767: GFX Online - [GBPUSD,Daily]</h1>
        <WinButtons />
      </header>
      <div className={clsx('flex h-[20px] items-center pl-[5px]', mono)}>
        <AppIcon />
        <div className="flex gap-4 pl-[7px]">
          {menus.map(([label, open, key, close]) => (
            <button key={key} className="whitespace-pre">
              <span className={hans}>{label}</span>{open}<u>{key}</u>{close}
            </button>
          ))}
        </div>
        <WinButtons restore />
      </div>

      <div className='flex h-[27px] items-center border-t border-b border-t-white border-b-[#808080] pl-[6px] font-["Liberation_Sans",sans-serif] text-[9px] shadow-[0_-1px_0_#808080]'>
        <Tool name="new" />
        <Tool name="save" />
        <Tool name="print" />
        <Sep />
        <Tool name="market" on />
        <Tool name="navigator" on />
        <Tool name="pc" on />
        <Sep />
        <Tool name="order" />
        <Sep />
        <Tool name="edit" />
        <Grip />
        <Tool name="cursor" on />
        <Tool name="cross" />
        <Sep />
        <Tool name="vline" />
        <Tool name="hline" />
        <Tool name="trend" />
        <Tool name="channel" />
        <Tool name="fan" />
        <Sep />
        <Tool name="fibo" />
        <Tool name="fibofan" />
        <Tool name="fork" />
        <Sep />
        <Tool name="text"><span className='font-["DejaVu_Sans_Mono",monospace] text-[13px] font-bold'>A</span></Tool>
        <Tool name="arrows" />
        <Sep />
        <Tool name="indicators"><span className='font-["Liberation_Serif",serif] text-[12px] font-bold italic'>ff</span></Tool>
        <Grip />
        <Tool name="bars" />
        <Tool name="candle" on />
        <Tool name="line" />
        <Sep />
        <Tool name="zoomin" />
        <Tool name="zoomout" />
        <Sep />
        <Tool name="scroll" on />
        <Tool name="shift" />
        <Tool name="expert" on />
        <Sep />
        <Tool name="chartwin" />
        <Tool name="chartwins" />
        <Grip />
        {['M1', 'M5', 'M15', 'M30', 'H1', 'H4', 'D1', 'W1'].map(t => (
          <Tool key={t} name={t} on={t === 'D1'}>{t}</Tool>
        ))}
        <Sep />
      </div>

      <main className="flex flex-1 flex-col">
        <div className="flex h-[219px] pb-px">
          <MarketWatch />
          <Chart />
        </div>
        <Terminal />
      </main>
      <StatusBar />
      <Taskbar />
    </div>
  )
}
